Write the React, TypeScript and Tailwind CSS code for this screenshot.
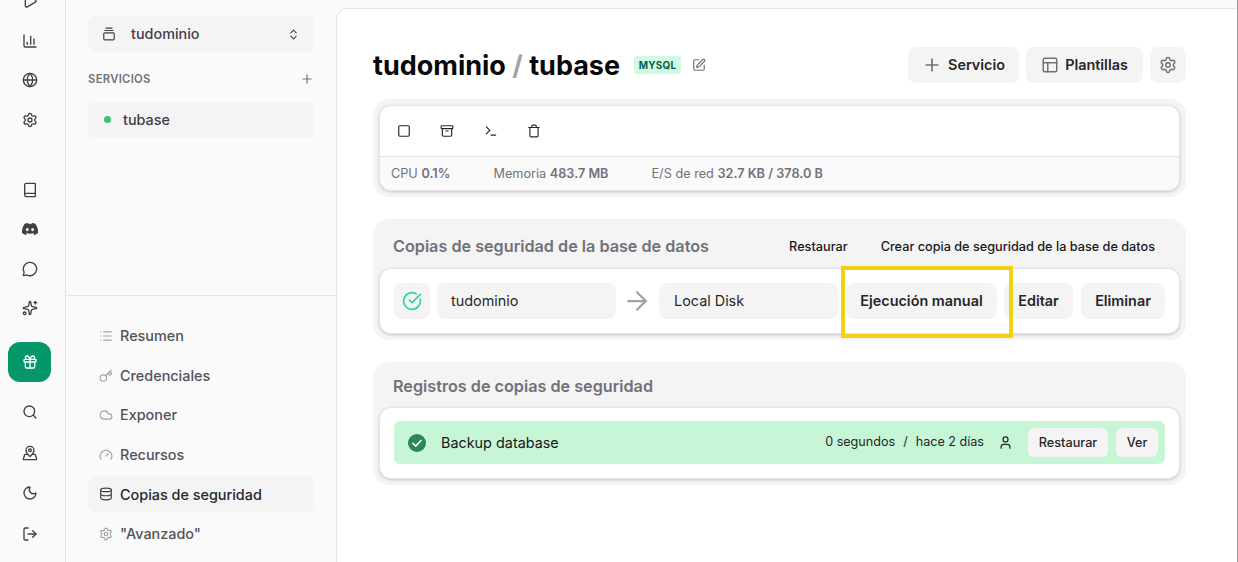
import {
  Archive,
  ArrowRight,
  Book,
  ChartColumn,
  ChevronsUpDown,
  CircleCheckBig,
  Cloud,
  Database,
  GalleryVerticalEnd,
  Gauge,
  Gift,
  Globe,
  Key,
  List,
  LogOut,
  MapPinned,
  MessageCircle,
  Moon,
  PanelsTopLeft,
  Play,
  Plus,
  Search,
  Settings,
  Sparkles,
  Square,
  SquarePen,
  Terminal,
  Trash,
  User,
} from "lucide-react"

function DiscordIcon() {
  return (
    <svg viewBox="0 0 24 24" className="h-4 w-4 fill-[#3f3f46]">
      <path d="M20.3 4.4A19.8 19.8 0 0 0 15.4 3l-.6 1.3a18.4 18.4 0 0 0-5.6 0L8.600 3a19.700 19.700 0 0 0-4.900 1.400C.6 9 -.3 13.500.1 18a19.900 19.900 0 0 0 6.100 3l1.300-2c-.7-.3-1.300-.6-1.900-1l.5-.4a14.200 14.200 0 0 0 12 0l.5.4c-.6.400-1.200.700-1.900 1l1.300 2a19.900 19.900 0 0 0 6-3c.5-5.200-.9-9.600-3.800-13.600ZM8 15.300c-1.200 0-2.200-1.100-2.200-2.400S6.800 10.500 8 10.500s2.200 1.100 2.200 2.400-1 2.400-2.200 2.400Zm8 0c-1.200 0-2.200-1.100-2.200-2.400s1-2.400 2.200-2.400 2.200 1.100 2.200 2.400-1 2.400-2.200 2.400Z" />
    </svg>
  )
}

const railIcon = "flex h-[39.6px] w-[60px] items-center justify-center text-[#3f3f46]"
const railIconLow = "flex h-[40.6px] w-[60px] items-center justify-center text-[#3f3f46]"
const navItem = "flex h-9 items-center gap-[7px] rounded-lg px-[11px] text-[14.4px] font-medium text-[#52525b]"
const navGlyph = "h-[14px] w-[14px] text-[#a1a1aa]"
const softButton = "flex h-9 items-center justify-center rounded-lg bg-[#f4f4f5] text-[14.4px] font-semibold text-[#27272a]"
const panel = "rounded-2xl bg-[#f4f4f5] p-[6px]"
const panelBody = "rounded-xl border border-[#e4e4e7] bg-white shadow-[0_1px_3px_rgba(0,0,0,0.18)]"

export default function App() {
  return (
    <div className="flex h-[562px] w-[1238px] overflow-hidden border-r border-[#9a9a9a] bg-[#fafafa] font-['Inter',sans-serif]">
      {/* Icon rail */}
      <aside className="flex h-full w-[66px] shrink-0 flex-col overflow-hidden border-r border-[#e4e4e7]">
        <div className="-mt-[18.5px] flex flex-col">
          <div className={railIcon}><Play size={16} /></div>
          <div className={railIcon}><ChartColumn size={16} /></div>
          <div className={railIcon}><Globe size={16} /></div>
          <div className={railIcon}><Settings size={16} /></div>
        </div>
        <div className="mt-[30px] flex flex-col">
          <div className={railIcon}><Book size={16} /></div>
          <div className={railIcon}><DiscordIcon /></div>
          <div className={railIcon}><MessageCircle size={16} /></div>
          <div className={railIcon}><Sparkles size={16} /></div>
        </div>
        <div className="mt-[14px] ml-2 flex h-10 w-[43px] items-center justify-center rounded-xl bg-[#059669] text-white">
          <Gift size={16} />
        </div>
        <div className="mt-[9.5px] flex flex-col">
          <div className={railIconLow}><Search size={16} /></div>
          <div className={railIconLow}><MapPinned size={16} /></div>
          <div className={railIconLow}><Moon size={16} /></div>
          <div className={railIconLow}><LogOut size={16} /></div>
        </div>
      </aside>

      {/* Project sidebar */}
      <aside className="flex h-full w-[270px] shrink-0 flex-col">
        <div className="h-[296px] shrink-0 border-b border-[#e4e4e7] px-[22px] pt-4">
          <div className="flex h-9 items-center rounded-lg bg-[#f4f4f5] px-[14px] text-[14.4px] font-medium text-[#3f3f46]">
            <GalleryVerticalEnd size={14} className="text-[#3f3f46]" />
            <span className="ml-[15px] flex-1">tudominio</span>
            <ChevronsUpDown size={13} />
          </div>
          <div className="mt-[19px] flex items-center justify-between">
            <span className="text-[11.3px] font-semibold tracking-wide text-[#71717a]">SERVICIOS</span>
            <Plus size={14} className="text-[#71717a]" />
          </div>
          <div className="mt-[14px] flex h-9 items-center rounded-lg bg-[#f4f4f5] pl-4 text-[14.4px] font-medium text-[#3f3f46]">
            <span className="h-[7px] w-[7px] rounded-full bg-[#3fbf78]" />
            <span className="ml-[12px]">tubase</span>
          </div>
        </div>
        <nav className="flex flex-col gap-[3.6px] px-[22px] pt-[22px]">
          <a className={navItem}><List className={navGlyph} />Resumen</a>
          <a className={navItem}><Key className={navGlyph} />Credenciales</a>
          <a className={navItem}><Cloud className={navGlyph} />Exponer</a>
          <a className={navItem}><Gauge className={navGlyph} />Recursos</a>
          <a className={navItem + " bg-[#f4f4f5] !text-[#27272a]"}><Database className="h-[14px] w-[14px] text-[#3f3f46]" />Copias de seguridad</a>
          <a className={navItem}><Settings className={navGlyph} />"Avanzado"</a>
        </nav>
      </aside>

      {/* Main */}
      <main className="mt-2 flex-1 rounded-tl-xl border-l border-t border-[#e4e4e7] bg-white pl-9 pr-[51px] pt-[38px]">
        <header className="flex h-9 items-center">
          <h1 className="text-[27px] font-bold leading-none text-[#09090b]">
            tudominio <span className="text-[#a1a1aa]">/</span> tubase
          </h1>
          <span className="ml-[14px] flex h-[18px] w-[47px] items-center justify-center rounded-[3px] bg-[#d1fae5] text-[10px] font-bold tracking-wide text-[#065f46]">
            MYSQL
          </span>
          <SquarePen size={14} className="ml-[11px] text-[#71717a]" />
          <div className="ml-auto flex gap-[7px]">
            <button className={softButton + " w-[111px] gap-[6px]"}><Plus size={20} className="text-[#71717a]" />Servicio</button>
            <button className={softButton + " w-[117px] gap-[6px]"}><PanelsTopLeft size={18} className="text-[#71717a]" />Plantillas</button>
            <button className={softButton + " w-9"}><Settings size={18} className="text-[#71717a]" /></button>
          </div>
        </header>

        <section className={panel + " mt-[16px]"}>
          <div className={panelBody + " overflow-hidden"}>
            <div className="flex h-[50px] items-center gap-[29.3px] px-[17px] text-[#27272a]">
              <Square size={14} />
              <Archive size={14} />
              <Terminal size={14} />
              <Trash size={14} />
            </div>
            <div className="flex h-[34px] items-center gap-[43px] border-t border-[#e4e4e7] bg-[#fafafa] px-[11px] text-[12.7px] text-[#71717a]">
              <span>CPU <b className="font-semibold">0.1%</b></span>
              <span>Memoria <b className="font-semibold">483.7 MB</b></span>
              <span>E/S de red <b className="font-semibold">32.7 KB / 378.0 B</b></span>
            </div>
          </div>
        </section>

        <section className={panel + " mt-[22px]"}>
          <div className="flex h-[43px] items-center pl-[14px] pr-[25px]">
            <h2 className="flex-1 text-[16.2px] font-semibold text-[#71717a]">Copias de seguridad de la base de datos</h2>
            <span className="text-[12.7px] font-medium text-[#18181b]">Restaurar</span>
            <span className="ml-[33px] text-[12.7px] font-medium text-[#18181b]">Crear copia de seguridad de la base de datos</span>
          </div>
          <div className={panelBody + " relative flex h-[66px] items-center px-[14px]"}>
            <span className="flex h-9 w-9 items-center justify-center rounded-lg bg-[#f4f4f5]">
              <CircleCheckBig size={20} className="text-[#34d399]" />
            </span>
            <span className="ml-[7px] flex h-9 w-[179px] items-center rounded-lg bg-[#f4f4f5] pl-[14px] text-[14.4px] text-[#27272a]">tudominio</span>
            <ArrowRight size={30} strokeWidth={1.8} className="ml-[6px] text-[#a1a1aa]" />
            <span className="ml-[7px] flex h-9 w-[179px] items-center rounded-lg bg-[#f4f4f5] pl-[15px] text-[14.4px] text-[#27272a]">Local Disk</span>
            <button className={softButton + " ml-2 w-[151px]"}>Ejecución manual</button>
            <button className={softButton + " ml-[7px] w-[69px]"}>Editar</button>
            <button className={softButton + " ml-2 w-[84px]"}>Eliminar</button>
            <span className="absolute left-[461px] top-[-3px] h-[72px] w-[172px] border-4 border-[#f2d014]" />
          </div>
        </section>

        <section className={panel + " mt-[22px]"}>
          <div className="mb-[3px] flex h-9 items-center pl-[14px]">
            <h2 className="text-[16.2px] font-semibold text-[#71717a]">Registros de copias de seguridad</h2>
          </div>
          <div className={panelBody + " px-[14px] pb-[14px] pt-[13px]"}>
            <div className="flex h-[43px] items-center rounded-md bg-[#c6f6d5] pl-[14px] pr-[7px]">
              <svg viewBox="0 0 18 18" className="h-[18px] w-[18px]">
                <circle cx="9" cy="9" r="9" fill="#2f855a" />
                <path d="M5 9.400l2.700 2.700L13 6.500" fill="none" stroke="#fff" strokeWidth="1.600" strokeLinecap="round" strokeLinejoin="round" />
              </svg>
              <span className="ml-[15px] flex-1 text-[14.4px] text-[#18181b]">Backup database</span>
              <span className="text-[12.6px] text-[#27272a]">0 segundos</span>
              <span className="ml-2 text-[12.6px] text-[#27272a]">/</span>
              <span className="ml-2 text-[12.6px] text-[#27272a]">hace 2 días</span>
              <User size={15} className="ml-[14px] text-[#27272a]" />
              <button className="ml-[15px] flex h-[29px] w-20 items-center justify-center rounded-md bg-[#f4f4f5] text-[12.7px] font-medium text-[#27272a]">Restaurar</button>
              <button className="ml-2 flex h-[29px] w-[42px] items-center justify-center rounded-md bg-[#f4f4f5] text-[12.7px] font-medium text-[#27272a]">Ver</button>
            </div>
          </div>
        </section>
      </main>
    </div>
  )
}
